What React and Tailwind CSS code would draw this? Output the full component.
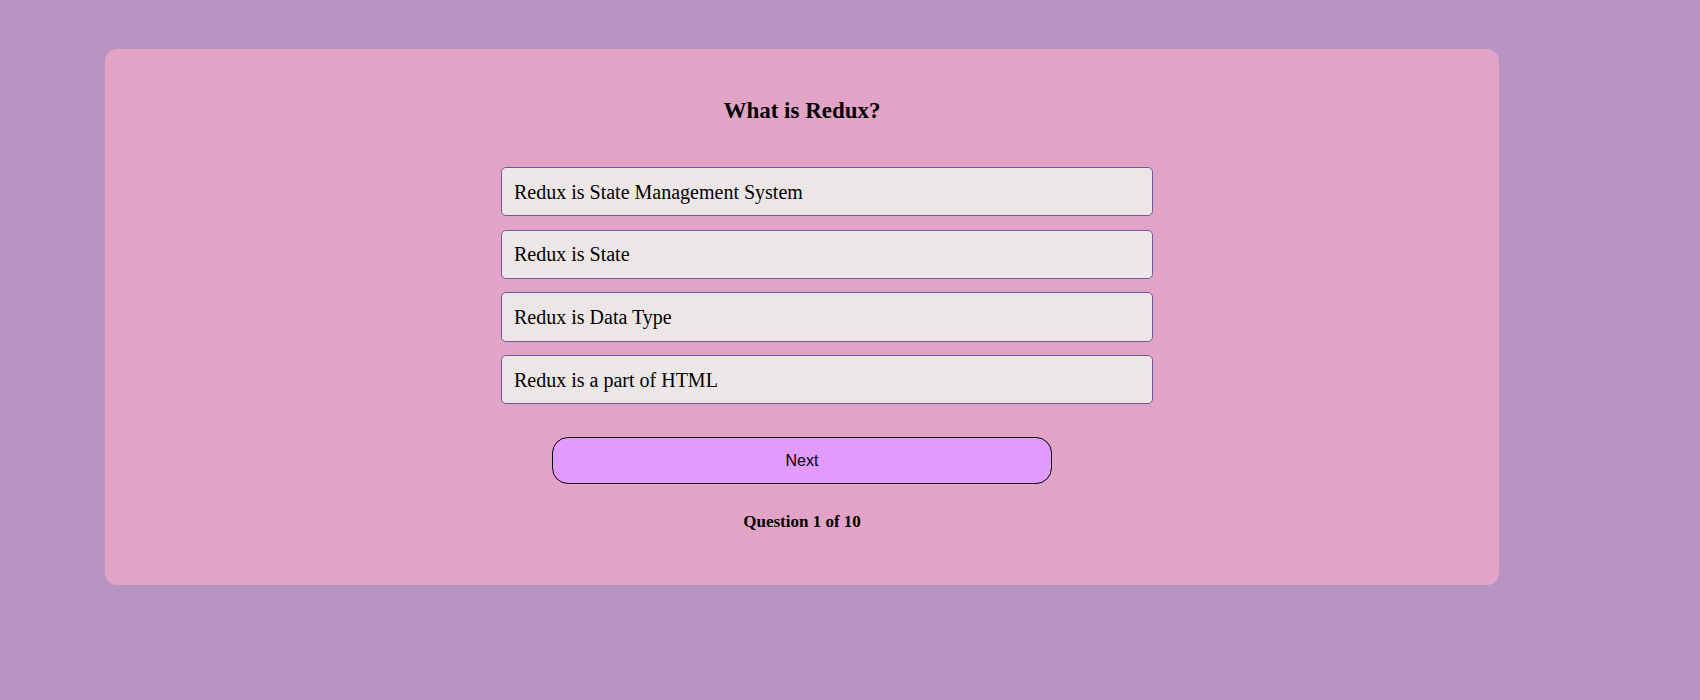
import React from 'react'

const options = [
  'Redux is State Management System',
  'Redux is State',
  'Redux is Data Type',
  'Redux is a part of HTML',
]

const App = () => {
  return (
    <div className="min-h-[700px] bg-[#b794c2] pt-[49px] pl-[105px] font-['Liberation_Serif',serif] text-black">
      <div className="w-[1394px] h-[536px] rounded-[12px] bg-[#e1a4c6] flex flex-col">
        {/* Question title */}
        <h2 className="pt-[47px] text-center text-[23px] leading-[30px] font-bold">What is Redux?</h2>

        {/* Answer options */}
        <div className="mt-[41px] ml-[396px] w-[652px] flex flex-col gap-[13.3px]">
          {options.map((opt) => (
            <button
              key={opt}
              className="h-[49.4px] flex items-center pl-[12px] text-left text-[20px] bg-[#ece6e6] border border-[#6e5a9e] rounded-[5px]"
            >
              {opt}
            </button>
          ))}
        </div>

        {/* Next button */}
        <button className="mt-[33px] ml-[447px] w-[500px] h-[47px] rounded-[16px] border border-black bg-[#e09bfd] font-['Liberation_Sans',sans-serif] text-[16px]">
          Next
        </button>

        {/* Progress */}
        <p className="mt-[28px] text-center text-[17px] leading-[20px] font-bold">Question 1 of 10</p>
      </div>
    </div>
  )
}

export default App
